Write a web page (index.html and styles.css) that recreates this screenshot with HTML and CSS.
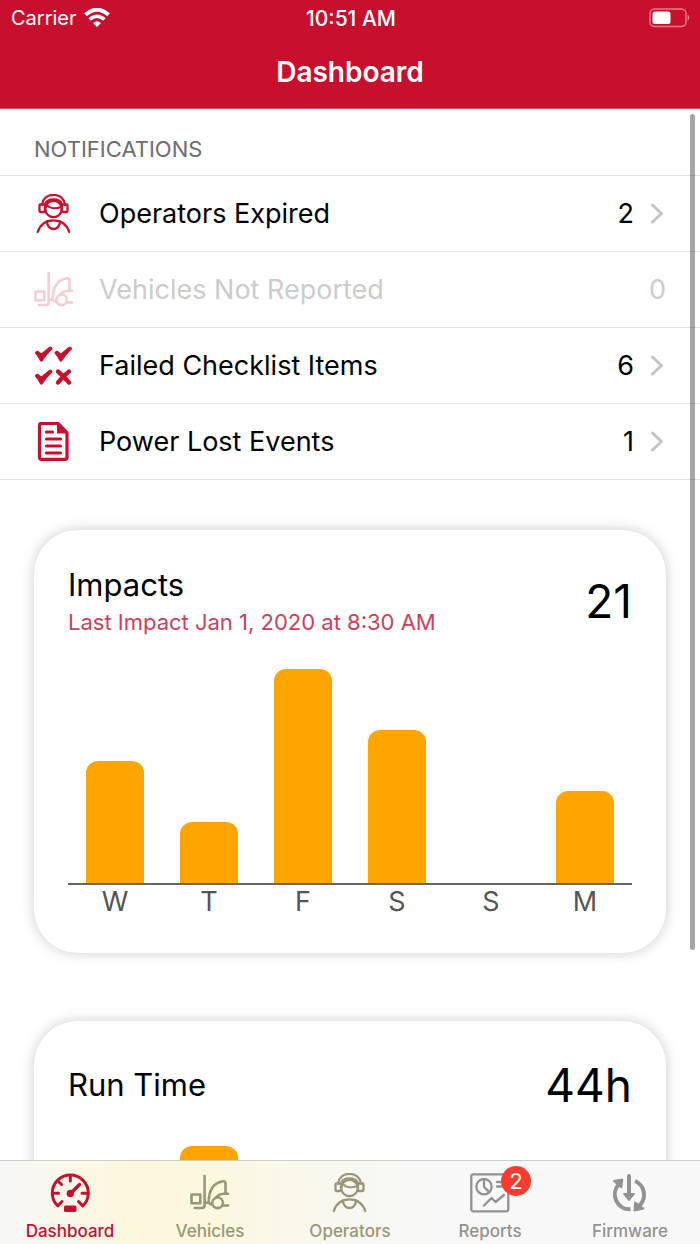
FILE: index.html
```html
<!DOCTYPE html>
<html lang="en">
<head>
    <meta charset="UTF-8">
    <meta name="viewport" content="width=device-width, initial-scale=1.0">
    <title>Dashboard</title>
    <link rel="stylesheet" href="styles.css">
</head>
<body>
    <!-- Shared icons -->
    <svg class="sprite" aria-hidden="true">
        <symbol id="operator" viewBox="0 0 40 40">
            <g fill="none" stroke="currentColor" stroke-width="2.300" stroke-linecap="round" stroke-linejoin="round">
                <path d="M8 10.500C9 4.500 13.500 .9 19.500 .9S30 4.500 31 10.500"/>
                <path d="M11 10.500C12 7 15 5.500 19.500 5.500S27 7 28 10.500"/>
                <rect x="5.500" y="10.500" width="5.500" height="7.500" rx="1"/>
                <rect x="28" y="10.500" width="5.500" height="7.500" rx="1"/>
                <circle cx="19.500" cy="15" r="8.200"/>
                <path d="M12.500 11C16 14.500 22 15 27 13"/>
                <path d="M3.800 38C6 31 11.500 26.300 19.500 26.300S33 31 35.200 38"/>
                <path d="M13 27.500C13 37.500 26 37.500 26 27.500"/>
            </g>
        </symbol>
        <symbol id="forklift" viewBox="0 0 40 40">
            <g fill="none" stroke="currentColor" stroke-width="2.600" stroke-linecap="round" stroke-linejoin="round">
                <rect x="1.500" y="21.500" width="8.800" height="8.800"/>
                <path d="M14.600 3V32C14.600 34 14 35 12 35H4.800"/>
                <path d="M15 29.800H18.500L21.500 31.500"/>
                <path d="M18.700 29.500C18.700 17 24 9.500 33.500 8.300C35 8.200 35.500 9 35.500 10.500V20.500"/>
                <path d="M38 20.800H34C29.500 21 27.500 22.500 25.500 25"/>
                <circle cx="27.600" cy="29.800" r="5.300"/>
                <path d="M33.500 32.500H38"/>
            </g>
        </symbol>
        <symbol id="checks" viewBox="0 0 40 40">
            <g fill="currentColor" stroke="currentColor" stroke-width="1.200" stroke-linejoin="round">
                <path id="tick" d="M1.500 7C2 5.500 3.300 5 4.300 5.700L7.300 8.300L15.500 1.500C16.500 .8 18.300 1.500 17.800 3C14 6.500 11 10 8.300 14.500C7.800 15.300 7 15.300 6.500 14.500C5 11.500 3.500 9.500 1.500 7Z"/>
                <use href="#tick" x="19.500"/>
                <use href="#tick" y="23"/>
            </g>
            <path d="M24 25.500Q29 29.500 35 36.500M35 25.500Q29 30 24 36.500" fill="none" stroke="currentColor" stroke-width="4.400" stroke-linecap="round"/>
        </symbol>
        <symbol id="document" viewBox="0 0 40 40">
            <path d="M7.500 1.300H24L33 10.500V35.300Q33 37.300 31 37.300H7.500Q5.500 37.300 5.500 35.300V3.300Q5.500 1.300 7.500 1.300Z" fill="none" stroke="currentColor" stroke-width="3.200" stroke-linejoin="round"/>
            <path d="M23 1L34 11.500H23Z" fill="currentColor"/>
            <path d="M12.500 10H18.500M12.500 17H26.500M12.500 24H26.500M12.500 31H26.500" stroke="currentColor" stroke-width="3.200" stroke-linecap="round"/>
        </symbol>
        <symbol id="gauge" viewBox="0 0 40 40">
            <g fill="none" stroke="currentColor" stroke-width="3" stroke-linecap="round" stroke-linejoin="round">
                <path d="M12 28.500L7.800 33A18 18 0 1 1 32.800 33L28.500 28.500"/>
                <path d="M20.300 3V8M2.500 20.300H8.500M32 20.300H38M8 8L11.500 11.500"/>
                <path d="M20.500 20.500L29.500 11.500" stroke-width="3.400"/>
            </g>
            <circle cx="20.300" cy="20.500" r="3.700" fill="currentColor"/>
            <rect x="14" y="32.500" width="12.500" height="6.500" rx="1.500" fill="currentColor"/>
        </symbol>
        <symbol id="report" viewBox="0 0 40 40">
            <g fill="none" stroke="currentColor" stroke-width="2.300" stroke-linecap="round" stroke-linejoin="round">
                <rect x="1.300" y="1.300" width="37" height="37" rx="2"/>
                <circle cx="14" cy="13.700" r="7.700"/>
                <path d="M14 6.300V13.700L19 19M27 9H34M27 13.500H34M14 32.500L21.500 25L25.500 29L34 22"/>
            </g>
        </symbol>
        <symbol id="update" viewBox="0 0 40 40">
            <g fill="none" stroke="currentColor" stroke-width="4">
                <path d="M8.500 11.500A15 15 0 0 0 20.500 36.300"/>
                <path d="M25 8A15 15 0 0 1 29 33"/>
                <path d="M19 3V23" stroke-linecap="round"/>
            </g>
            <g fill="currentColor" stroke="currentColor" stroke-linejoin="round" stroke-width="1.800">
                <path d="M4 8L12.300 6.300L11.500 14.500Z"/>
                <path d="M25 29.500L33.500 35.500L24.500 37.500Z"/>
                <path d="M14 21H24L19 27Z"/>
            </g>
        </symbol>
        <symbol id="chevron" viewBox="0 0 16 24">
            <path d="M2.500 3L11.500 11.500L2.500 20" fill="none" stroke="currentColor" stroke-width="3" stroke-linecap="round" stroke-linejoin="round"/>
        </symbol>
    </svg>

    <header class="header">
        <div class="status">
            <div class="carrier">
                <span>Carrier</span>
                <svg class="wifi" viewBox="0 0 26 20" aria-hidden="true">
                    <path d="M1.500 6.800Q13-3.500 24.500 6.800" fill="none" stroke="#fff" stroke-width="4"/>
                    <path d="M5.600 11.500Q13 5 20.400 11.500" fill="none" stroke="#fff" stroke-width="3.600"/>
                    <path d="M9 15Q13 11.500 17 15L13 19Z" fill="#fff"/>
                </svg>
            </div>
            <time>10:51 AM</time>
            <svg class="battery" viewBox="0 0 42 20" aria-hidden="true">
                <rect x="1" y="1" width="36" height="17.500" rx="4.500" fill="none" stroke="#e27f8e" stroke-width="1.400"/>
                <rect x="3.500" y="3.500" width="18" height="12.500" rx="2.500" fill="#fff"/>
                <path d="M38.700 6.500Q42 9.700 38.700 13Z" fill="#e27f8e"/>
            </svg>
        </div>
        <h1>Dashboard</h1>
    </header>

    <main class="content">
        <h2 class="list-title">NOTIFICATIONS</h2>
        <ul class="list">
            <li>
                <a class="row" href="#operators">
                    <svg class="icon"><use href="#operator"/></svg>
                    <span class="name">Operators Expired</span>
                    <span>2</span>
                    <svg class="chevron"><use href="#chevron"/></svg>
                </a>
            </li>
            <li>
                <div class="row empty">
                    <svg class="icon"><use href="#forklift"/></svg>
                    <span class="name">Vehicles Not Reported</span>
                    <span>0</span>
                </div>
            </li>
            <li>
                <a class="row" href="#checklists">
                    <svg class="icon"><use href="#checks"/></svg>
                    <span class="name">Failed Checklist Items</span>
                    <span>6</span>
                    <svg class="chevron"><use href="#chevron"/></svg>
                </a>
            </li>
            <li>
                <a class="row" href="#power">
                    <svg class="icon"><use href="#document"/></svg>
                    <span class="name">Power Lost Events</span>
                    <span>1</span>
                    <svg class="chevron"><use href="#chevron"/></svg>
                </a>
            </li>
        </ul>

        <div class="cards">
            <section class="card">
                <div class="card-header">
                    <div>
                        <h3>Impacts</h3>
                        <p class="last">Last Impact Jan 1, 2020 at 8:30 AM</p>
                    </div>
                    <span class="total">21</span>
                </div>
                <div class="bars">
                    <div class="bar" style="height: 57.1%"></div>
                    <div class="bar" style="height: 28.6%"></div>
                    <div class="bar" style="height: 100%"></div>
                    <div class="bar" style="height: 71.4%"></div>
                    <div class="bar" style="height: 0%"></div>
                    <div class="bar" style="height: 42.9%"></div>
                </div>
                <div class="days"><span>W</span><span>T</span><span>F</span><span>S</span><span>S</span><span>M</span></div>
            </section>

            <section class="card">
                <div class="card-header">
                    <h3>Run Time</h3>
                    <span class="total">44h</span>
                </div>
                <div class="bars">
                    <div class="bar" style="height: 75%"></div>
                    <div class="bar" style="height: 100%"></div>
                    <div class="bar" style="height: 67%"></div>
                    <div class="bar" style="height: 50%"></div>
                    <div class="bar" style="height: 0%"></div>
                    <div class="bar" style="height: 75%"></div>
                </div>
            </section>
        </div>

        <div class="scroll-thumb"></div>
    </main>

    <nav class="tabs">
        <a class="tab active" href="#dashboard"><svg class="icon"><use href="#gauge"/></svg>Dashboard</a>
        <a class="tab warm" href="#vehicles"><svg class="icon"><use href="#forklift"/></svg>Vehicles</a>
        <a class="tab warm" href="#operators"><svg class="icon"><use href="#operator"/></svg>Operators</a>
        <a class="tab" href="#reports">
            <span class="badge-holder"><svg class="icon"><use href="#report"/></svg><span class="badge">2</span></span>Reports
        </a>
        <a class="tab" href="#firmware"><svg class="icon"><use href="#update"/></svg>Firmware</a>
    </nav>
</body>
</html>
```
FILE: styles.css
```css
* {
    box-sizing: border-box;
}
body {
    margin: 0;
    height: 100vh;
    display: flex;
    flex-direction: column;
    background-color: white;
    color: black;
    font-family: Inter, "Liberation Sans", sans-serif;
    font-size: 27px;
}
h1, h2, h3, p, ul {
    margin: 0;
    padding: 0;
    font-weight: 400;
}
ul {
    list-style: none;
}
a {
    color: inherit;
    text-decoration: none;
}
.sprite {
    position: absolute;
    width: 0;
    height: 0;
}
.icon {
    display: block;
    width: 40px;
    height: 40px;
    flex-shrink: 0;
}

/* Header */
.header {
    background-color: #c8102e;
    color: white;
    border-bottom: 1px solid #d5505f;
}
.status {
    display: grid;
    grid-template-columns: 1fr auto 1fr;
    align-items: center;
    height: 36px;
    padding: 0 9px 0 11px;
    font-size: 20px;
}
.status time {
    font-size: 21px;
    font-weight: 500;
}
.carrier {
    display: flex;
    align-items: center;
    gap: 7px;
}
.wifi {
    width: 26px;
    height: 20px;
}
.battery {
    width: 42px;
    height: 20px;
    justify-self: end;
}
.header h1 {
    font-size: 28px;
    font-weight: 600;
    line-height: 72px;
    text-align: center;
}

/* Notifications */
.content {
    flex: 1;
    min-height: 0;
    position: relative;
    overflow: hidden;
}
.list-title {
    padding: 24px 34px 10px;
    border-bottom: 1px solid #e2e2e3;
    color: #6d6d72;
    font-size: 22px;
    line-height: 32px;
}
.row {
    display: flex;
    align-items: center;
    height: 76px;
    padding: 0 34px;
    border-bottom: 1px solid #e2e2e3;
}
.row .icon {
    margin-right: 25px;
    color: #c8102e;
}
.row .name {
    flex: 1;
}
.row .chevron {
    width: 16px;
    height: 24px;
    margin-left: 16px;
    color: #c4c4c6;
}
.row.empty {
    color: #cccccc;
}
.row.empty .icon {
    opacity: 0.2;
}

/* Charts */
.cards {
    display: flex;
    flex-direction: column;
    gap: 68px;
    padding: 50px 34px;
}
.card {
    padding: 34px;
    border-radius: 44px;
    background-color: white;
    box-shadow: 0 0 14px rgba(0, 0, 0, 0.2);
}
.card-header {
    display: flex;
    align-items: center;
    justify-content: space-between;
}
.card h3 {
    font-size: 31px;
    line-height: 42px;
}
.last {
    color: #cc4060;
    font-size: 22px;
    line-height: 32px;
}
.total {
    font-size: 46px;
    line-height: 60px;
}
.bars {
    display: grid;
    grid-template-columns: repeat(6, 1fr);
    align-items: end;
    justify-items: center;
    height: 216px;
    margin-top: 31px;
    border-bottom: 2px solid #666666;
}
.bar {
    width: 61%;
    border-radius: 12px 12px 0 0;
    background-color: #ffa500;
}
.days {
    display: grid;
    grid-template-columns: repeat(6, 1fr);
    color: #555555;
    line-height: 34px;
    text-align: center;
}
.scroll-thumb {
    position: absolute;
    top: 5px;
    right: 5px;
    bottom: 20%;
    width: 5px;
    border-radius: 3px;
    background-color: rgba(0, 0, 0, 0.35);
}

/* Tab bar */
.tabs {
    display: grid;
    grid-template-columns: repeat(5, 1fr);
    border-top: 1px solid #cdcdc8;
    background: linear-gradient(90deg, #f7f7f7 0%, #fcf8de 18%, #fbf8df 30%, #f8f8f2 50%, #f8f8f8 62%);
}
.tab {
    display: flex;
    flex-direction: column;
    align-items: center;
    gap: 6px;
    padding: 12px 0 1px;
    color: #929292;
    font-size: 17px;
    font-weight: 500;
    line-height: 24px;
}
.tab.active {
    color: #c8102e;
}
.tab.warm {
    color: #9a9777;
}
.badge-holder {
    position: relative;
}
.badge {
    position: absolute;
    top: -7px;
    left: 31px;
    width: 30px;
    height: 30px;
    border-radius: 50%;
    background-color: #ff3b30;
    color: white;
    font-size: 22px;
    font-weight: 400;
    line-height: 30px;
    text-align: center;
}
```
